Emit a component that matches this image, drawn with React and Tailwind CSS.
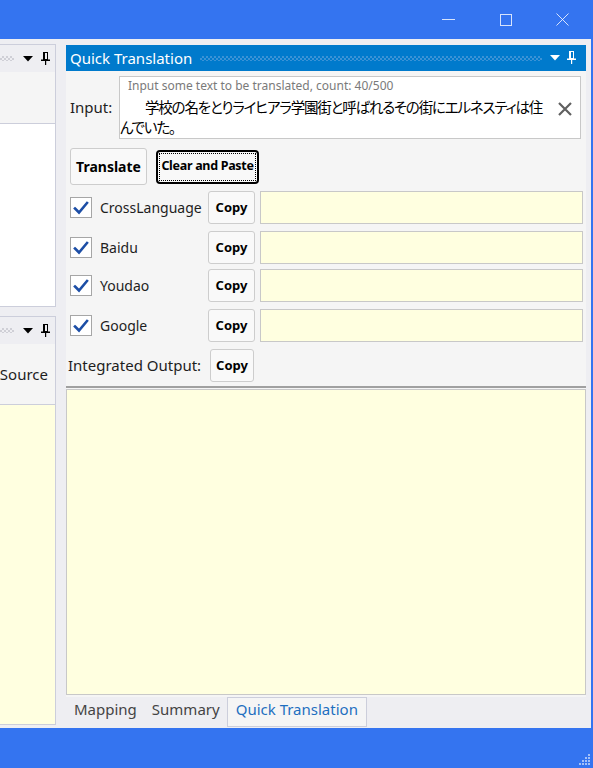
import React from "react";

function Tri({ color = "#000" }) {
  return (
    <svg width="10" height="6" viewBox="0 0 10 6">
      <polygon points="0,0 10,0 5,5.5" fill={color} />
    </svg>
  );
}

function Pin({ color = "#000" }) {
  return (
    <svg width="9" height="13" viewBox="0 0 9 13">
      <rect x="2.5" y="0.5" width="4" height="7" fill="none" stroke={color} strokeWidth="1" />
      <rect x="2" y="0" width="2" height="8" fill={color} />
      <rect x="0" y="7.5" width="9" height="1.5" fill={color} />
      <rect x="4" y="8.5" width="1.2" height="4.5" fill={color} />
    </svg>
  );
}

function Check() {
  return (
    <div className="w-[22px] h-[21px] border border-[#a6a6a6] bg-white flex items-center justify-center">
      <svg width="16" height="14" viewBox="0 0 16 14">
        <path d="M2 7.5 L6 11.5 L14 2" fill="none" stroke="#1c4ea6" strokeWidth="2.6" strokeLinecap="square" />
      </svg>
    </div>
  );
}

function CopyBtn({ w = "w-[47px]" }) {
  return (
    <div className={`${w} h-[33px] border border-[#cdcdcd] rounded-[3px] bg-[#f9f9f9] flex items-center justify-center text-[13px] font-bold text-black`}>
      Copy
    </div>
  );
}

function EngineRow({ name, mt }) {
  return (
    <div className={`${mt} h-[33px] flex items-center pl-[4px] pr-[3px]`}>
      <div className="w-[138px] flex items-center">
        <Check />
        <span className="ml-[8px] text-[14px] text-[#1e1e1e]">{name}</span>
      </div>
      <CopyBtn />
      <div className="ml-[5px] flex-1 h-[33px] bg-[#ffffe0] border border-[#c8c8c8]" />
    </div>
  );
}

export default function App() {
  return (
    <div className="w-[593px] h-[768px] bg-[#3474f0] flex flex-col overflow-hidden font-['Noto_Sans','Noto_Sans_CJK_JP',sans-serif]">
      {/* title bar */}
      <div className="h-[39px] flex justify-end pr-[2px]">
        <div className="w-[57px] h-[39px] flex items-center justify-center">
          <div className="w-[13px] h-[1px] bg-white/80" />
        </div>
        <div className="w-[57px] h-[39px] flex items-center justify-center">
          <div className="w-[12px] h-[12px] border border-white/80" />
        </div>
        <div className="w-[57px] h-[39px] flex items-center justify-center">
          <svg width="13" height="13" viewBox="0 0 13 13">
            <path d="M0.5 0.5 L12.5 12.5 M12.5 0.5 L0.5 12.5" stroke="rgba(255,255,255,0.8)" strokeWidth="1" />
          </svg>
        </div>
      </div>

      {/* main */}
      <div className="h-[689px] mr-[2px] bg-[#eeeef2] flex">
        {/* left column */}
        <div className="w-[56px] pt-[5px] flex flex-col">
          <div className="h-[263px] border-t border-r border-b border-[#cccedb] bg-[#f5f5f5] flex flex-col">
            <div className="h-[27px] flex items-center bg-[#eeeef2]">
              <div className="w-[14px] h-[5px] bg-[image:repeating-conic-gradient(#cfcfd6_0_25%,transparent_0_50%)] bg-[length:4px_4px]" />
              <div className="ml-[9px]"><Tri /></div>
              <div className="ml-[8px] mt-[-1px]"><Pin /></div>
            </div>
            <div className="h-[51px]" />
            <div className="flex-1 bg-white border-t border-[#cccedb]" />
          </div>
          <div className="mt-[9px] flex-1 mb-[3px] border-t border-r border-b border-[#cccedb] bg-[#f5f5f5] flex flex-col">
            <div className="h-[27px] flex items-center bg-[#eeeef2]">
              <div className="w-[14px] h-[5px] bg-[image:repeating-conic-gradient(#cfcfd6_0_25%,transparent_0_50%)] bg-[length:4px_4px]" />
              <div className="ml-[9px]"><Tri /></div>
              <div className="ml-[8px] mt-[-1px]"><Pin /></div>
            </div>
            <div className="h-[60px] flex items-center justify-end pr-[7px] text-[15px] text-[#1e1e1e]">Source</div>
            <div className="flex-1 bg-[#ffffe0] border-t border-[#cccedb]" />
          </div>
        </div>

        {/* right column */}
        <div className="ml-[10px] w-[520px] pt-[6px] flex flex-col">
          <div className="h-[26px] bg-[#007acc] flex items-center pl-[4px] pr-[10px]">
            <span className="text-[15px] text-white leading-none">Quick Translation</span>
            <div className="ml-[8px] flex-1 h-[5px] bg-[image:repeating-conic-gradient(#3b93d6_0_25%,transparent_0_50%)] bg-[length:4px_4px]" />
            <div className="ml-[8px]"><Tri color="#fff" /></div>
            <div className="ml-[7px] mt-[-1px]"><Pin color="#fff" /></div>
          </div>

          <div className="h-[626px] bg-[#f5f5f5] flex flex-col">
            {/* input row */}
            <div className="mt-[5px] h-[63px] flex items-center pl-[4px] pr-[4px]">
              <span className="w-[49px] text-[15px] text-[#1e1e1e]">Input:</span>
              <div className="w-[462px] h-[63px] border border-[#c8c8c8] bg-white flex">
                <div className="flex-1 flex flex-col">
                  <div className="pl-[8px] text-[12px] leading-[17px] text-[#7a7a7a]">
                    Input some text to be translated, count: 40/500
                  </div>
                  <div className="mt-[3px] text-[14.5px] leading-[20px] text-black font-['Noto_Sans_CJK_JP',sans-serif] [font-feature-settings:'palt'] tracking-[-1.2px]">
                    <div className="pl-[25px] whitespace-nowrap">学校の名をとりライヒアラ学園街と呼ばれるその街にエルネスティは住</div>
                    <div className="whitespace-nowrap">んでいた。</div>
                  </div>
                </div>
                <div className="w-[30px] flex justify-center pt-[24px]">
                  <svg width="16" height="16" viewBox="0 0 16 16">
                    <path d="M2 2 L14 14 M14 2 L2 14" stroke="#606060" strokeWidth="2.2" />
                  </svg>
                </div>
              </div>
            </div>

            {/* buttons */}
            <div className="mt-[9px] h-[37px] flex items-center pl-[4px]">
              <div className="w-[77px] h-[37px] border border-[#cdcdcd] rounded-[3px] bg-[#f9f9f9] flex items-center justify-center text-[14px] font-bold text-black">
                Translate
              </div>
              <div className="ml-[9px] w-[103px] h-[34px] border-2 border-black rounded-[4px] bg-[#f9f9f9] p-[1px]">
                <div className="w-full h-full border border-dotted border-black flex items-center justify-center text-[12.5px] font-bold text-black tracking-[-0.3px]">
                  Clear and Paste
                </div>
              </div>
            </div>

            <EngineRow name="CrossLanguage" mt="mt-[6px]" />
            <EngineRow name="Baidu" mt="mt-[7px]" />
            <EngineRow name="Youdao" mt="mt-[5px]" />
            <EngineRow name="Google" mt="mt-[7px]" />

            <div className="mt-[7px] h-[33px] flex items-center pl-[2px]">
              <span className="w-[142px] text-[15px] text-[#1e1e1e]">Integrated Output:</span>
              <CopyBtn w="w-[44px]" />
            </div>

            <div className="mt-[4px] h-[2px] bg-[#a0a0a0]" />
            <div className="mt-[1px] flex-1 bg-[#ffffe0] border border-[#c8c8c8]" />
            <div className="h-[2px]" />
          </div>

          {/* tabs */}
          <div className="h-[31px] flex items-start">
            <div className="h-[30px] px-[8px] pb-[5px] flex items-center text-[15px] text-[#444]">Mapping</div>
            <div className="h-[30px] px-[7px] pb-[5px] flex items-center text-[15px] text-[#444]">Summary</div>
            <div className="h-[30px] px-[8px] pb-[5px] flex items-center text-[15px] text-[#1e6fc0] bg-[#f5f5f5] border border-[#cccedb]">Quick Translation</div>
          </div>
        </div>
      </div>

      {/* status bar */}
      <div className="flex-1 flex justify-end items-end pr-[2px] pb-[2px]">
        <svg width="12" height="12" viewBox="0 0 12 12">
          <g fill="rgba(255,255,255,0.55)">
            <rect x="9" y="0" width="2" height="2" />
            <rect x="6" y="3" width="2" height="2" />
            <rect x="9" y="3" width="2" height="2" />
            <rect x="3" y="6" width="2" height="2" />
            <rect x="6" y="6" width="2" height="2" />
            <rect x="9" y="6" width="2" height="2" />
            <rect x="0" y="9" width="2" height="2" />
            <rect x="3" y="9" width="2" height="2" />
            <rect x="6" y="9" width="2" height="2" />
            <rect x="9" y="9" width="2" height="2" />
          </g>
        </svg>
      </div>
    </div>
  );
}
